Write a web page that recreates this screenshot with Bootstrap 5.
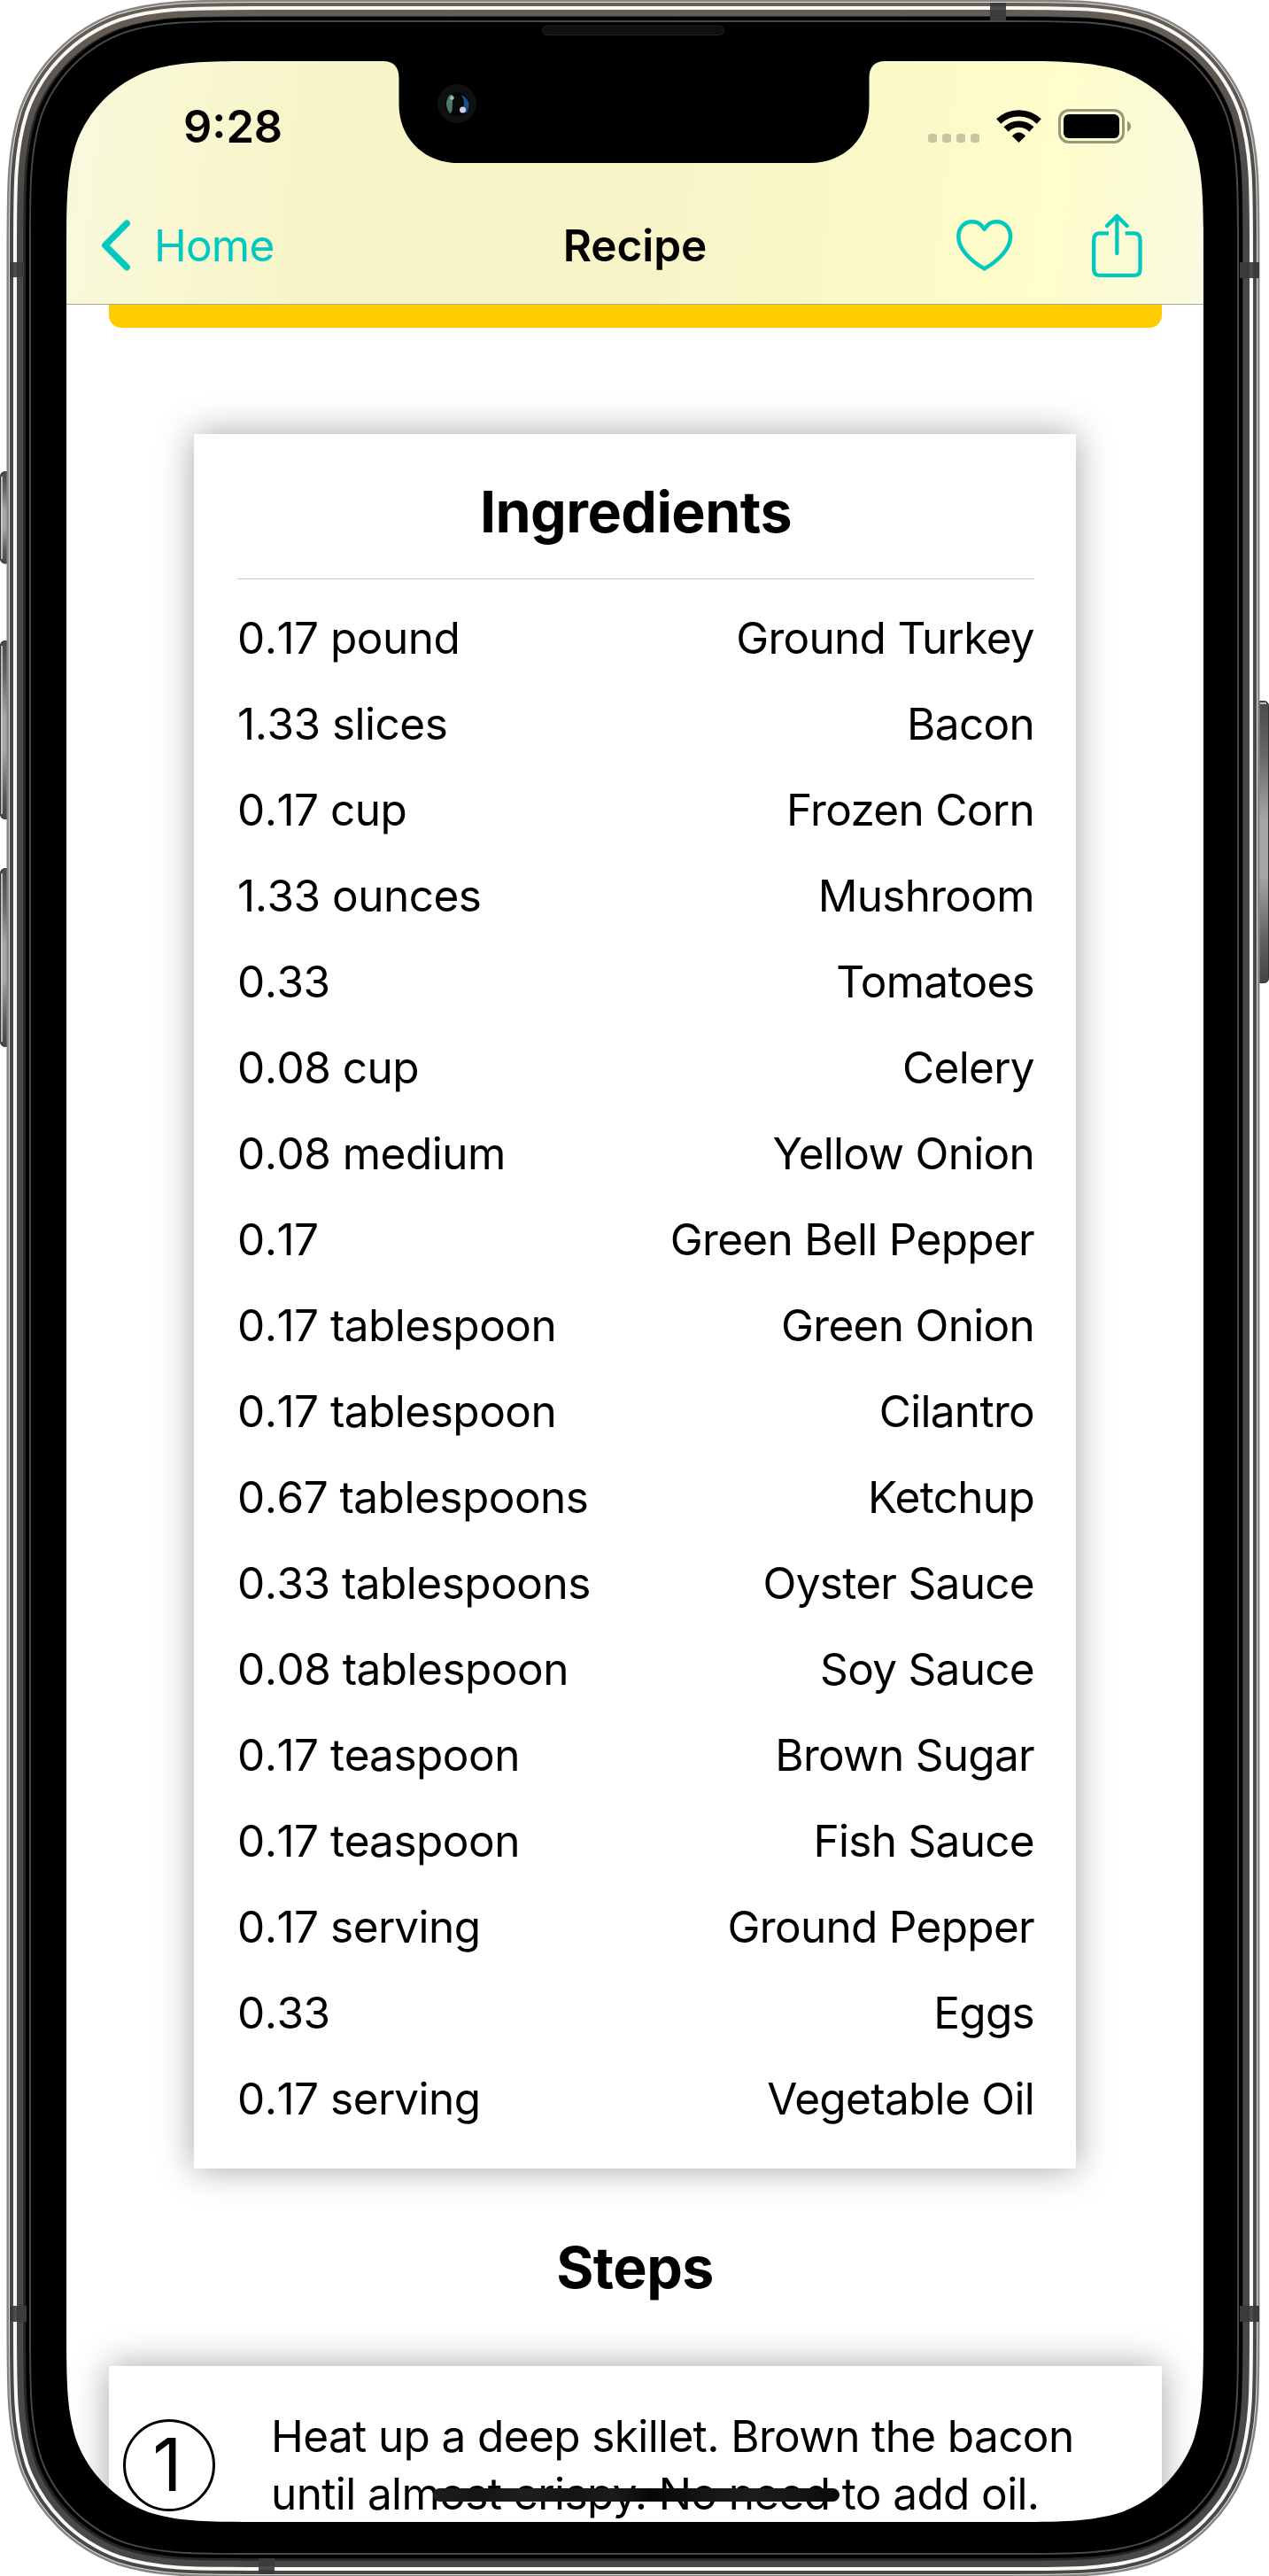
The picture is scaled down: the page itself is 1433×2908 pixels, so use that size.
<!DOCTYPE html>
<html lang="en">
<head>
<meta charset="utf-8">
<title>Recipe</title>
<meta name="viewport" content="width=device-width, initial-scale=1">
<link href="https://cdn.jsdelivr.net/npm/bootstrap@5.3.0/dist/css/bootstrap.min.css" rel="stylesheet">
<style>
  :root { --teal: #00c9c0; }
  body { font-family: Inter, "Liberation Sans", sans-serif; color: #000; background: #fff; }
  .phone { width: 1433px; height: 2908px; padding: 69px 74px 61px 75px; }
  .screen { background: #fff; }
  .topbar {
    height: 275px; border-bottom: 1px solid #a9a89b;
    background: linear-gradient(96deg, #f9f8e0 0%, #f9f9d6 6%, #f7f4c8 22%, #f7f5c8 52%, #fbf9c8 72%, #fefdcb 86%, #fafae0 100%);
  }
  .status { height: 142px; padding: 0 82px 0 132px; }
  .clock { font-size: 50.5px; font-weight: 600; line-height: 60px; letter-spacing: 0; margin-top: 44px; }
  .status-icons { margin-top: 54px; gap: 19px; }
  .navrow { height: 132px; padding: 0 69px 0 39px; }
  .back { color: var(--teal); font-size: 49.5px; letter-spacing: -.8px; gap: 26px; width: 430px; }
  .nav-title { font-size: 49.5px; font-weight: 600; letter-spacing: -.05px; }
  .tools { width: 400px; gap: 89px; color: var(--teal); }
  .banner { height: 26px; margin: 0 47px 0 48px; background: #fc0; border-radius: 0 0 14px 14px; }
  .sheet { background: #fff; box-shadow: 0 0 38px rgba(0,0,0,.36); }
  .ingredients { margin: 120px 144px 0 144px; padding: 48.5px 47px 30.5px 49px; }
  .heading { font-size: 64.5px; font-weight: 700; line-height: 78px; letter-spacing: -.55px; margin: 0; }
  .rule { height: 1px; background: #c6c6c8; margin: 36.5px 0 17.5px; flex: none; }
  .ing { height: 97px; font-size: 49.5px; line-height: 97px; white-space: nowrap; }
  .qty { letter-spacing: -.5px; font-kerning: none; }
  .item { letter-spacing: -.7px; }
  .steps-title { margin: 72.5px 0; }
  .step { margin: 0 47px 0 48px; height: 240px; padding-top: 46.5px; }
  .num { width: 104px; height: 104px; border: 3px solid #000; border-radius: 50%; margin: 13px 63px 0 16px; font-size: 82px; font-weight: 400; line-height: 98px; padding-right: 4px; flex: none; }
  .copy { font-size: 49.5px; line-height: 65.3px; letter-spacing: -.62px; white-space: nowrap; margin: 0; }
  .home-bar { left: 489px; top: 2809px; width: 459px; height: 15px; border-radius: 8px; background: linear-gradient(90deg, #1d1d1d, #141414 12%, #1e1e1e 22%, #141414 34%, #1b1b1b 44%, #060606 54%, #141414 66%, #1c1c1c 78%, #141414 90%, #070707); }
  svg { display: block; flex: none; }
</style>
</head>
<body>
<main class="phone position-relative overflow-hidden">
  <div class="screen h-100 d-flex flex-column overflow-hidden">
    <header class="topbar flex-shrink-0">
      <div class="status d-flex justify-content-between align-items-start">
        <span class="clock">9:28</span>
        <div class="status-icons d-flex">
          <svg width="58" height="39" fill="#c8c69f"><rect y="28" width="10" height="10" rx="3"/><rect x="16" y="28" width="10" height="10" rx="3"/><rect x="32" y="28" width="10" height="10" rx="3"/><rect x="48" y="28" width="10" height="10" rx="3"/></svg>
          <svg width="51" height="39" viewBox="0 0 51 39"><g transform="translate(25.5 38)"><path d="M-22.8-24A33 33 0 0 1 22.8-24M-14.4-15A20.7 20.7 0 0 1 14.4-15" fill="none" stroke="#000" stroke-width="7.4"/><path d="M0 0L-7.6-7.6Q0-15.2 7.6-7.6Z"/></g></svg>
          <svg width="82" height="39"><rect x="1.5" y="1.5" width="72" height="36" rx="10.5" fill="none" stroke="#98977a" stroke-width="3"/><rect x="6" y="6" width="63" height="27" rx="6"/><path d="M78 13.5Q82 15.5 82 19.7T78 25.7Z" fill="#98977a"/></svg>
        </div>
      </div>
      <nav class="navrow d-flex align-items-center justify-content-between">
        <div class="back d-flex align-items-center"><svg width="34" height="58" viewBox="0 0 34 58"><path d="M29.2 4.2L4.7 29L29.2 53.6" fill="none" stroke="currentColor" stroke-width="7.4" stroke-linecap="round" stroke-linejoin="round"/></svg><span>Home</span></div>
        <span class="nav-title">Recipe</span>
        <div class="tools d-flex justify-content-end align-items-center">
          <svg width="64" height="58" viewBox="0 0 64 58" fill="none" stroke="currentColor" stroke-width="4.5"><path d="M31.6 10.7C28.5 5.5 23.8 2.3 18 2.3C8.8 2.3 2.3 9.3 2.3 19.2C2.3 33 16 46.5 31.6 55.4C47 46.5 61 33 61 19.2C61 9.3 54.4 2.3 45.2 2.3C39.4 2.3 34.7 5.5 31.6 10.7Z" stroke-linejoin="round"/></svg>
          <svg width="57" height="73" viewBox="0 0 57 73" fill="none" stroke="currentColor" stroke-width="4.3"><path d="M19 22.4H9.2Q2.2 22.4 2.2 29.4V62.9Q2.2 69.9 9.2 69.9H47.5Q54.5 69.9 54.5 62.9V29.4Q54.5 22.4 47.5 22.4H37.7"/><path d="M28.3 3.3V45M17 14L28.3 2.8L39.6 14" stroke-linecap="round" stroke-linejoin="round"/></svg>
        </div>
      </nav>
    </header>

    <div class="banner flex-shrink-0"></div>

    <section class="sheet ingredients d-flex flex-column flex-shrink-0">
      <h2 class="heading text-center">Ingredients</h2>
      <div class="rule"></div>
      <div class="ing d-flex justify-content-between"><span class="qty">0.17 pound</span><span class="item">Ground Turkey</span></div>
      <div class="ing d-flex justify-content-between"><span class="qty">1.33 slices</span><span class="item">Bacon</span></div>
      <div class="ing d-flex justify-content-between"><span class="qty">0.17 cup</span><span class="item">Frozen Corn</span></div>
      <div class="ing d-flex justify-content-between"><span class="qty">1.33 ounces</span><span class="item">Mushroom</span></div>
      <div class="ing d-flex justify-content-between"><span class="qty">0.33</span><span class="item">Tomatoes</span></div>
      <div class="ing d-flex justify-content-between"><span class="qty">0.08 cup</span><span class="item">Celery</span></div>
      <div class="ing d-flex justify-content-between"><span class="qty">0.08 medium</span><span class="item">Yellow Onion</span></div>
      <div class="ing d-flex justify-content-between"><span class="qty">0.17</span><span class="item">Green Bell Pepper</span></div>
      <div class="ing d-flex justify-content-between"><span class="qty">0.17 tablespoon</span><span class="item">Green Onion</span></div>
      <div class="ing d-flex justify-content-between"><span class="qty">0.17 tablespoon</span><span class="item">Cilantro</span></div>
      <div class="ing d-flex justify-content-between"><span class="qty">0.67 tablespoons</span><span class="item">Ketchup</span></div>
      <div class="ing d-flex justify-content-between"><span class="qty">0.33 tablespoons</span><span class="item">Oyster Sauce</span></div>
      <div class="ing d-flex justify-content-between"><span class="qty">0.08 tablespoon</span><span class="item">Soy Sauce</span></div>
      <div class="ing d-flex justify-content-between"><span class="qty">0.17 teaspoon</span><span class="item">Brown Sugar</span></div>
      <div class="ing d-flex justify-content-between"><span class="qty">0.17 teaspoon</span><span class="item">Fish Sauce</span></div>
      <div class="ing d-flex justify-content-between"><span class="qty">0.17 serving</span><span class="item">Ground Pepper</span></div>
      <div class="ing d-flex justify-content-between"><span class="qty">0.33</span><span class="item">Eggs</span></div>
      <div class="ing d-flex justify-content-between"><span class="qty">0.17 serving</span><span class="item">Vegetable Oil</span></div>
    </section>

    <h2 class="heading steps-title text-center flex-shrink-0">Steps</h2>

    <section class="sheet step d-flex align-items-start flex-shrink-0">
      <div class="num text-center">1</div>
      <p class="copy">Heat up a deep skillet. Brown the bacon<br>until almost crispy. No need to add oil.</p>
    </section>
  </div>

  <div class="home-bar position-absolute"></div>

  <!-- Device frame laid over the screen -->
  <svg class="position-absolute top-0 start-0 pe-none" width="1433" height="2908" viewBox="0 0 1433 2908" fill="none">
    <defs>
      <path id="body" d="M291.8,25H1140.2C1214.1,25 1251.1,25 1290.9,37.6C1334.4,53.4 1368.6,87.6 1384.4,131.1C1397,170.9 1397,207.9 1397,281.8V2625.2C1397,2699.1 1397,2736.1 1384.4,2775.9C1368.6,2819.4 1334.4,2853.6 1290.9,2869.4C1251.1,2882 1214.1,2882 1140.2,2882H291.8C217.9,2882 180.9,2882 141.1,2869.4C97.6,2853.6 63.4,2819.4 47.6,2775.9C35,2736.1 35,2699.1 35,2625.2V281.8C35,207.9 35,170.9 47.6,131.1C63.4,87.6 97.6,53.4 141.1,37.6C180.9,25 217.9,25 291.8,25Z"/>
      <linearGradient id="steel" gradientUnits="userSpaceOnUse" x1="0" y1="0" x2="0" y2="2908"><stop offset="0" stop-color="#665f57"/><stop offset=".03" stop-color="#5c5751"/><stop offset=".08" stop-color="#484848"/><stop offset="1" stop-color="#484848"/></linearGradient>
      <linearGradient id="key" x1="0" y1="0" x2="0" y2="1"><stop offset="0" stop-color="#4a4a4c"/><stop offset=".2" stop-color="#68686a"/><stop offset=".42" stop-color="#a6a6a8"/><stop offset=".62" stop-color="#a6a6a8"/><stop offset=".85" stop-color="#606062"/><stop offset="1" stop-color="#444446"/></linearGradient>
    </defs>
    <g fill="url(#key)" stroke="#333" stroke-width="1">
      <rect x=".5" y="532.5" width="16" height="103.500" rx="5"/><rect x=".5" y="723.5" width="16" height="201" rx="5"/><rect x=".5" y="980.5" width="16" height="201" rx="5"/>
      <rect x="1412.5" y="791.5" width="20" height="318" rx="5"/>
    </g>
    <path d="M2 538V631M2 729V919M2 986V1176" stroke="#d2d2d2" stroke-width="1.6"/>
    <path d="M1423 794H1430" stroke="#bbb" stroke-width="2"/>
    <g transform="translate(-1 1)">
      <use href="#body" stroke="#858583" stroke-width="53"/>
      <use href="#body" stroke="#dfddd8" stroke-width="48"/>
      <use href="#body" stroke="url(#steel)" stroke-width="46"/>
      <use href="#body" stroke="#fbf8f4" stroke-width="38"/>
      <use href="#body" stroke="url(#steel)" stroke-width="30"/>
      <use href="#body" stroke="#262626" stroke-width="15.5"/>
    </g>
    <use href="#body" stroke="#000" stroke-width="12"/>
    <use href="#body" stroke="#484a49" stroke-width="4"/>
    <g fill="#3b3b3b"><path d="M11 296h16v17H11zM1400 296h22v18h-22zM11 2603h19v18H11zM1400 2603h22v18h-22zM1118 3h18v20h-18zM292 2888h18v18h-18z"/></g>
    <path fill="#4c4c4c" d="M15 296h4v17h-4zM1411 296h4v18h-4zM15 2603h4v18h-4zM1411 2603h4v18h-4zM1118 7h18v4h-18zM292 2897h18v4h-18z"/>
    <path fill="#000" fill-rule="evenodd" d="M291.8,25H1140.2C1214.1,25 1251.1,25 1290.9,37.6C1334.4,53.4 1368.6,87.6 1384.4,131.1C1397,170.9 1397,207.9 1397,281.8V2625.2C1397,2699.1 1397,2736.1 1384.4,2775.9C1368.6,2819.4 1334.4,2853.6 1290.9,2869.4C1251.1,2882 1214.1,2882 1140.2,2882H291.8C217.9,2882 180.9,2882 141.1,2869.4C97.6,2853.6 63.4,2819.4 47.6,2775.9C35,2736.1 35,2699.1 35,2625.2V281.8C35,207.9 35,170.9 47.6,131.1C63.4,87.6 97.6,53.4 141.1,37.6C180.9,25 217.9,25 291.8,25Z
      M299.7,69H432C445,69 450.5,76 450.5,88V118C450.5,157 480,184 517,184H915C952,184 981.5,157 981.5,118V88C981.5,76 987,69 1000,69H1134.3C1199,69 1231.3,69 1266.2,80C1304.2,93.9 1334.1,123.8 1348,161.8C1359,196.7 1359,229 1359,293.7V2622.3C1359,2687 1359,2719.3 1348,2754.2C1334.1,2792.2 1304.2,2822.1 1266.2,2836C1231.3,2847 1199,2847 1134.3,2847H299.7C235,2847 202.7,2847 167.8,2836C129.8,2822.1 99.9,2792.2 86,2754.2C75,2719.3 75,2687 75,2622.3V293.7C75,229 75,196.7 86,161.8C99.9,123.8 129.8,93.9 167.8,80C202.7,69 235,69 299.7,69Z"/>
    <rect x="612.5" y="29" width="205" height="10.5" rx="5" fill="#101010" stroke="#222"/>
    <circle cx="516" cy="117" r="22" fill="#101011"/>
    <circle cx="516" cy="117.500" r="13.500" fill="#050506"/>
    <path d="M508 107Q500 117 508 128Q511 128 511 117T511 107Z" fill="#4d7a68"/>
    <path d="M521 107Q534 114 527 127L521 127Q527 117 521 107Z" fill="#1b4f8c"/>
    <circle cx="516" cy="117" r="5" fill="#0b0b0c"/>
    <circle cx="510.500" cy="110.500" r="2.300" fill="#a9bdb5"/>
    <circle cx="522.500" cy="124" r="3.500" fill="#cfd0e4"/>
  </svg>
</main>
<script src="https://cdn.jsdelivr.net/npm/bootstrap@5.3.0/dist/js/bootstrap.bundle.min.js"></script>
</body>
</html>
